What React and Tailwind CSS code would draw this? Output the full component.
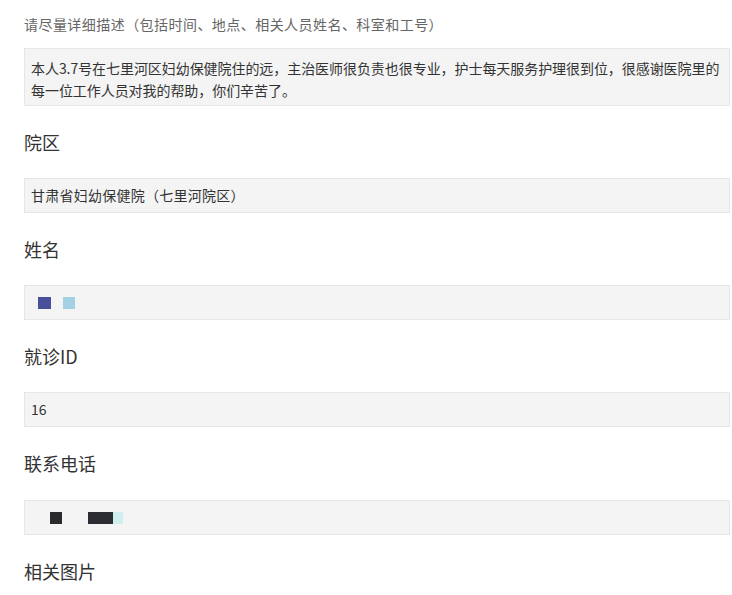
export default function App() {
  const font = { fontFamily: '"Noto Sans CJK SC", "Liberation Sans", sans-serif' };
  const Label = ({ children }) => (
    <div className="text-[18px] leading-[24px] text-[#333] mt-[24px]">{children}</div>
  );
  return (
    <div className="w-[732px] h-[595px] bg-white overflow-hidden pl-[24px] pr-[2px]" style={font}>
      <div className="pt-[14px] text-[14px] leading-[20px] text-[#666] tracking-[0.45px]">
        请尽量详细描述（包括时间、地点、相关人员姓名、科室和工号）
      </div>
      <div className="mt-[14px] h-[58px] border border-[#e6e6e6] bg-[#f4f4f4] pl-[6px] pt-[8px] text-[14px] leading-[22px] text-[#333] tracking-[-0.06px] whitespace-nowrap overflow-hidden">
        本人3.7号在七里河区妇幼保健院住的远，主治医师很负责也很专业，护士每天服务护理很到位，很感谢医院里的
        <br />
        每一位工作人员对我的帮助，你们辛苦了。
      </div>

      <Label>院区</Label>
      <div className="mt-[24px] h-[35px] border border-[#e6e6e6] bg-[#f4f4f4] pl-[6px] flex items-center text-[14px] text-[#333] tracking-[0.25px]">
        甘肃省妇幼保健院（七里河院区）
      </div>

      <Label>姓名</Label>
      <div className="mt-[24px] h-[35px] border border-[#e6e6e6] bg-[#f4f4f4] flex items-center">
        <div className="ml-[13px] w-[13px] h-[12px] bg-[#4a4f9c]" />
        <div className="ml-[12px] w-[12px] h-[12px] bg-[#a3d0e2]" />
      </div>

      <Label>就诊ID</Label>
      <div className="mt-[24px] h-[35px] border border-[#e6e6e6] bg-[#f4f4f4] pl-[6px] flex items-center text-[14px] text-[#333]">
        16
      </div>

      <Label>联系电话</Label>
      <div className="mt-[25px] h-[35px] border border-[#e6e6e6] bg-[#f4f4f4] flex items-center">
        <div className="ml-[25px] w-[12px] h-[12px] bg-[#2b2b2e]" />
        <div className="ml-[26px] w-[25px] h-[12px] bg-[#2b2d33]" />
        <div className="w-[10px] h-[12px] bg-[#cfeeee]" />
      </div>

      <Label>相关图片</Label>
    </div>
  );
}
